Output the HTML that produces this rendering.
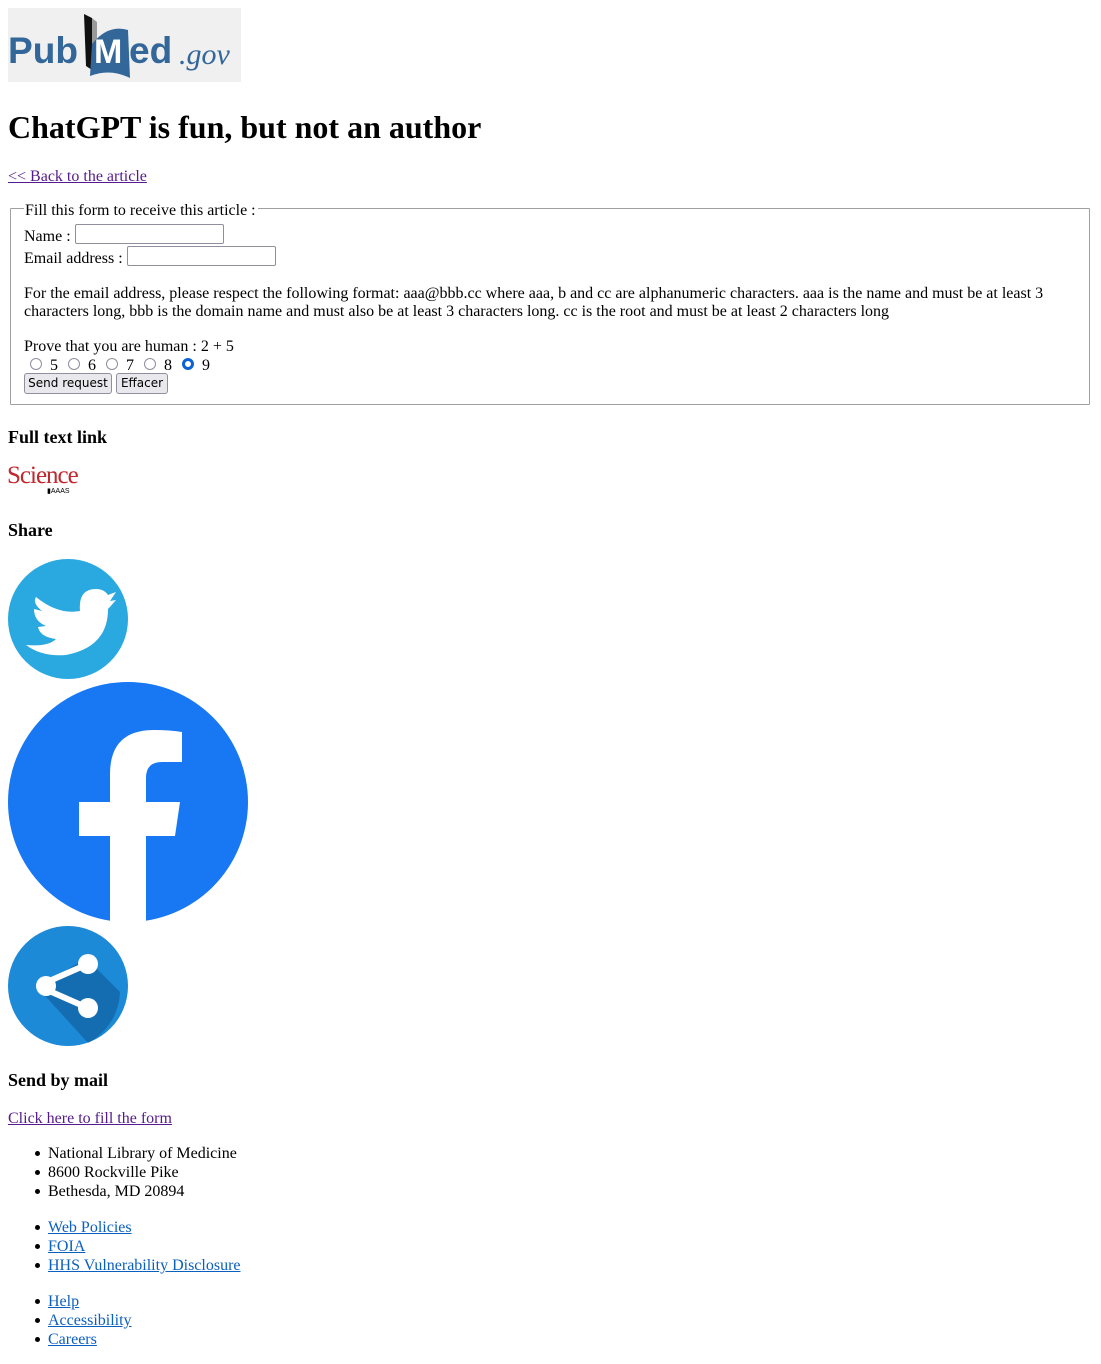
<!DOCTYPE html>
<html><head><meta charset="utf-8"><style>
body{margin:0;width:1101px;height:1364px;position:relative;font-family:"Liberation Serif",serif;font-size:16px;color:#000;background:#fff;overflow:hidden}
.a{position:absolute;white-space:nowrap;line-height:19px}
a{color:#551a8b}
.bl a{color:#0b5fbf}
h1,h3{margin:0;font-weight:bold}
input.t{position:absolute;height:20px;border:1px solid #8f8f9d;border-radius:2px;box-sizing:border-box;width:149px;margin:0}
.btn{position:absolute;height:21px;box-sizing:border-box;border:1px solid #8f8f9d;border-radius:3px;background:#e9e9ed;font-family:"DejaVu Sans",sans-serif;font-size:12px;line-height:19px;padding:0 5px}
.r{position:absolute;width:12px;height:12px;border:1.5px solid #8f8f9d;border-radius:50%;box-sizing:border-box;top:358px}
ul{margin:0;padding:0;list-style:none}
li{position:relative}
li:before{content:"";position:absolute;left:-13px;top:7px;width:5px;height:5px;border-radius:50%;background:#000}
</style></head><body>
<div style="position:absolute;left:8px;top:8px;width:233px;height:74px;background:#f0f0f0"></div>
<svg style="position:absolute;left:8px;top:8px" width="233" height="74">
<text x="0" y="55" font-family="Liberation Sans" font-weight="bold" font-size="37" fill="#336699" textLength="70" lengthAdjust="spacingAndGlyphs">Pub</text>
<path d="M76 6 L84 10 L84 56 L90 66 L78 58 Z" fill="#111"/>
<path d="M84 10 L89 14 L89 58 L84 56Z" fill="#999"/>
<path d="M82 68 L84 36 Q100 16 120 22 L122 70 Q102 60 82 68Z" fill="#336699"/>
<text x="86" y="55" font-family="Liberation Sans" font-weight="bold" font-size="34" fill="#fff">M</text>
<text x="121" y="55" font-family="Liberation Sans" font-weight="bold" font-size="37" fill="#336699">ed</text>
<text x="171" y="56" font-family="Liberation Serif" font-style="italic" font-size="30" fill="#336699">.gov</text>
</svg>
<h1 class="a" style="left:8px;top:109px;font-size:32px;line-height:36px">ChatGPT is fun, but not an author</h1>
<div class="a" style="left:8px;top:167px"><a href="#">&lt;&lt; Back to the article</a></div>
<div style="position:absolute;left:10px;top:208px;width:1078px;height:195px;border:1px solid #a0a0a0;border-radius:1px"></div>
<div class="a" style="top:201px;background:#fff;padding:0 2px 0 1px;left:24px">Fill this form to receive this article :</div>
<div class="a" style="left:24px;top:227px">Name :</div><input class="t" style="left:75px;top:224px">
<div class="a" style="left:24px;top:249px">Email address :</div><input class="t" style="left:127px;top:246px">
<div class="a" style="left:24px;top:285px;line-height:18px;white-space:normal;width:1050px">For the email address, please respect the following format: aaa@bbb.cc where aaa, b and cc are alphanumeric characters. aaa is the name and must be at least 3 characters long, bbb is the domain name and must also be at least 3 characters long. cc is the root and must be at least 2 characters long</div>
<div class="a" style="left:24px;top:337px">Prove that you are human : 2 + 5</div>
<div class="r" style="left:30px"></div><div class="a" style="left:50px;top:356px">5</div>
<div class="r" style="left:68px"></div><div class="a" style="left:88px;top:356px">6</div>
<div class="r" style="left:106px"></div><div class="a" style="left:126px;top:356px">7</div>
<div class="r" style="left:144px"></div><div class="a" style="left:164px;top:356px">8</div>
<div class="r" style="left:182px;border:3.5px solid #0b63d6"></div><div class="a" style="left:202px;top:356px">9</div>
<div class="btn" style="left:24px;top:373px;width:88px;padding:0;text-align:center">Send request</div>
<div class="btn" style="left:116px;top:373px;width:52px;padding:0;text-align:center">Effacer</div>
<h3 class="a" style="left:8px;top:428px;font-size:18px">Full text link</h3>
<div class="a" style="left:7px;top:462px;font-size:25px;color:#c1272d;letter-spacing:-1px;line-height:28px">Science</div>
<div class="a" style="left:47px;top:488px;font-size:7px;line-height:8px;font-family:'Liberation Sans'">▮AAAS</div>
<h3 class="a" style="left:8px;top:521px;font-size:18px">Share</h3>
<svg style="position:absolute;left:8px;top:559px" width="120" height="120"><circle cx="60" cy="60" r="60" fill="#2aa9e0"/>
<path d="M28 38 Q50 56 72 52 Q70 30 88 30 Q96 30 100 36 L108 33 L102 42 L108 41 Q102 48 100 50 Q100 88 58 96 Q34 98 18 86 Q40 88 48 80 Q32 78 30 68 L38 67 Q26 62 26 50 L34 52 Q24 44 28 38Z" fill="#fff"/></svg>
<svg style="position:absolute;left:8px;top:682px" width="240" height="240"><circle cx="120" cy="120" r="120" fill="#1877f2"/>
<path d="M102 240 L102 154 L71 154 L71 120 L102 120 L102 92 Q102 48 146 48 Q162 48 174 50 L174 80 L154 80 Q138 80 138 96 L138 120 L172 120 L167 154 L138 154 L138 240Z" fill="#fff"/></svg>
<svg style="position:absolute;left:8px;top:926px" width="120" height="120"><circle cx="60" cy="60" r="60" fill="#1d8ad8"/>
<path d="M30 62 L78 32 L112 66 A60 60 0 0 1 80 117 L30 62Z" fill="#0f5a96" opacity=".6"/>
<path d="M30 60 L80 38 M30 60 L80 82" stroke="#fff" stroke-width="6"/>
<circle cx="80" cy="38" r="10" fill="#fff"/><circle cx="38" cy="60" r="10" fill="#fff"/><circle cx="80" cy="82" r="10" fill="#fff"/></svg>
<h3 class="a" style="left:8px;top:1071px;font-size:18px">Send by mail</h3>
<div class="a" style="left:8px;top:1109px"><a href="#">Click here to fill the form</a></div>
<ul class="a" style="left:48px;top:1144px"><li>National Library of Medicine</li><li>8600 Rockville Pike</li><li>Bethesda, MD 20894</li></ul>
<ul class="a bl" style="left:48px;top:1218px"><li><a href="#">Web Policies</a></li><li><a href="#">FOIA</a></li><li><a href="#">HHS Vulnerability Disclosure</a></li></ul>
<ul class="a bl" style="left:48px;top:1292px"><li><a href="#">Help</a></li><li><a href="#">Accessibility</a></li><li><a href="#">Careers</a></li></ul>
</body></html>
